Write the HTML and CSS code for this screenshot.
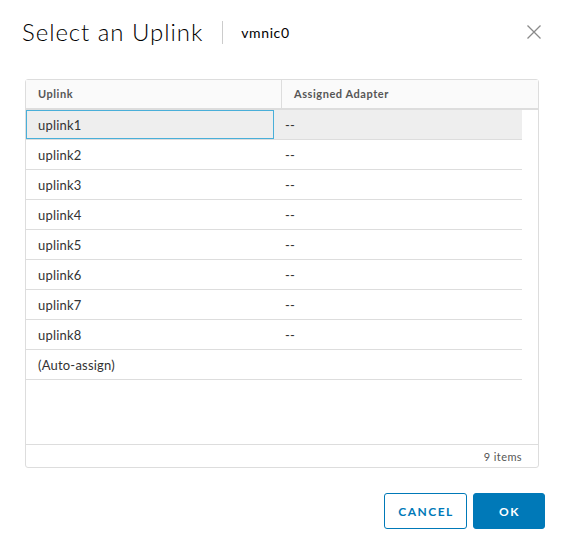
FILE: index.html
```html
<!DOCTYPE html>
<html>
<head>
<meta charset="utf-8">
<link rel="stylesheet" href="styles.css">
</head>
<body>
<div class="modal">
  <div class="modal-header">
    <h1 class="title">Select an Uplink</h1>
    <span class="divider"></span>
    <span class="subtitle">vmnic0</span>
    <button class="close" aria-label="Close">
      <svg width="16" height="16" viewBox="0 0 16 16"><path d="M1.5 1.5 L14.5 14.5 M14.5 1.5 L1.5 14.5" stroke="#8a8a8a" stroke-width="1.3" fill="none"/></svg>
    </button>
  </div>
  <div class="grid">
    <div class="grid-head">
      <div class="hcell hcell-1">Uplink</div>
      <div class="hcell hcell-2">Assigned Adapter</div>
    </div>
    <div class="grid-body">
      <div class="row selected"><div class="cell cell-1 focused">uplink1</div><div class="cell cell-2">--</div></div>
      <div class="row"><div class="cell cell-1">uplink2</div><div class="cell cell-2">--</div></div>
      <div class="row"><div class="cell cell-1">uplink3</div><div class="cell cell-2">--</div></div>
      <div class="row"><div class="cell cell-1">uplink4</div><div class="cell cell-2">--</div></div>
      <div class="row"><div class="cell cell-1">uplink5</div><div class="cell cell-2">--</div></div>
      <div class="row"><div class="cell cell-1">uplink6</div><div class="cell cell-2">--</div></div>
      <div class="row"><div class="cell cell-1">uplink7</div><div class="cell cell-2">--</div></div>
      <div class="row"><div class="cell cell-1">uplink8</div><div class="cell cell-2">--</div></div>
      <div class="row"><div class="cell cell-1">(Auto-assign)</div><div class="cell cell-2"></div></div>
    </div>
    <div class="grid-foot">9 items</div>
  </div>
  <div class="modal-footer">
    <button class="btn btn-outline">CANCEL</button>
    <button class="btn btn-primary">OK</button>
  </div>
</div>
</body>
</html>
```

FILE: styles.css
```css
* { box-sizing: border-box; }
html, body { margin: 0; padding: 0; background: #fff; }
body {
  font-family: Lato, "Open Sans", "Liberation Sans", sans-serif;
  color: #333;
  width: 566px;
  height: 548px;
}
.modal { padding: 0; }
.modal-header {
  display: flex;
  align-items: center;
  height: 30px;
  margin-top: 17px;
  padding: 0 24px 0 22px;
}
.title {
  margin: 0;
  font-size: 24px;
  font-weight: 300;
  color: #000;
  letter-spacing: 0.95px;
  line-height: 30px;
}
.divider {
  width: 1px;
  height: 23px;
  background: #ccc;
  margin: 0 0 0 19px;
}
.subtitle {
  font-size: 14px;
  color: #000;
  margin-left: 18px;
  letter-spacing: 0.6px;
}
.close {
  margin-left: auto;
  border: 0;
  background: none;
  padding: 0;
  width: 16px;
  height: 16px;
  display: flex;
}
.grid {
  margin: 32px 0 0 25px;
  width: 514px;
  height: 389px;
  border: 1px solid #ddd;
  border-radius: 3px;
  display: flex;
  flex-direction: column;
}
.grid-head {
  display: flex;
  height: 30px;
  background: #fafafa;
  border-bottom: 2px solid #ddd;
  font-size: 11px;
  font-weight: 700;
  color: #565656;
  letter-spacing: 0.55px;
}
.hcell {
  display: flex;
  align-items: center;
  padding-left: 12px;
  padding-bottom: 1px;
}
.hcell-1 { width: 256px; border-right: 1px solid #ddd; }
.hcell-2 { flex: 1; }
.grid-body {
  flex: 1;
  width: 496px;
}
.row {
  display: flex;
  height: 30px;
  border-bottom: 1px solid #ddd;
  font-size: 13px;
  color: #333;
  letter-spacing: 0.2px;
}
.row.selected { background: #eee; }
.cell {
  display: flex;
  align-items: center;
  padding-left: 12px;
}
.cell-1 { width: 248px; }
.cell-2 { flex: 1; padding-left: 11px; }
.focused { outline: 1px solid #49afd9; outline-offset: -1px; }
.grid-foot {
  height: 23px;
  border-top: 1px solid #ddd;
  display: flex;
  align-items: center;
  justify-content: flex-end;
  padding-right: 16px;
  font-size: 11px;
  color: #565656;
  letter-spacing: 0.4px;
}
.modal-footer {
  display: flex;
  justify-content: flex-end;
  gap: 6px;
  margin-top: 25px;
  padding-right: 21px;
}
.btn {
  height: 36px;
  border-radius: 3px;
  font-family: Lato, "Open Sans", sans-serif;
  font-size: 12px;
  font-weight: 700;
  letter-spacing: 1.5px;
  padding: 0 0 0 1px;
}
.btn-outline {
  width: 83px;
  background: #fff;
  border: 1px solid #0079b8;
  color: #0079b8;
}
.btn-primary {
  width: 72px;
  background: #0079b8;
  border: 1px solid #0079b8;
  color: #fff;
}
```
